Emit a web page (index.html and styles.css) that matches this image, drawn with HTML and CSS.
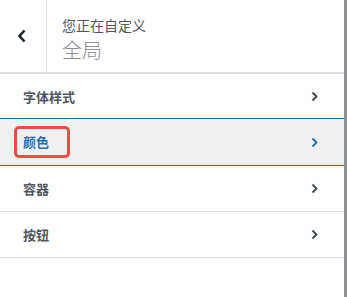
FILE: index.html
```html
<!DOCTYPE html>
<html lang="zh">
<head>
<meta charset="utf-8">
<link rel="stylesheet" href="styles.css">
</head>
<body>
<div class="panel">
  <div class="sidebar">
    <header class="head">
      <div class="back">
        <svg width="10" height="14" viewBox="0 0 10 14"><path d="M7.5 1.5 L2.5 7 L7.5 12.5" fill="none" stroke="#1d2327" stroke-width="2.6"/></svg>
      </div>
      <div class="title">
        <span class="sub">您正在自定义</span>
        <span class="main">全局</span>
      </div>
    </header>
    <ul class="list">
      <li class="item"><span class="label">字体样式</span><svg class="chev" width="7" height="11" viewBox="0 0 7 11"><path d="M1.5 1.5 L5.5 5.5 L1.5 9.5" fill="none" stroke="currentColor" stroke-width="1.8"/></svg></li>
      <li class="item active"><span class="label mark">颜色</span><svg class="chev" width="7" height="11" viewBox="0 0 7 11"><path d="M1.5 1.5 L5.5 5.5 L1.5 9.5" fill="none" stroke="currentColor" stroke-width="1.8"/></svg></li>
      <li class="item"><span class="label">容器</span><svg class="chev" width="7" height="11" viewBox="0 0 7 11"><path d="M1.5 1.5 L5.5 5.5 L1.5 9.5" fill="none" stroke="currentColor" stroke-width="1.8"/></svg></li>
      <li class="item"><span class="label">按钮</span><svg class="chev" width="7" height="11" viewBox="0 0 7 11"><path d="M1.5 1.5 L5.5 5.5 L1.5 9.5" fill="none" stroke="currentColor" stroke-width="1.8"/></svg></li>
    </ul>
  </div>
  <div class="scroll"></div>
</div>
</body>
</html>
```

FILE: styles.css
```css
html, body {
  margin: 0;
  padding: 0;
  background: #fff;
}
body {
  font-family: "Noto Sans CJK SC", "Noto Sans", sans-serif;
  color: #3c434a;
}
.panel {
  display: flex;
  height: 297px;
}
.sidebar {
  flex: 1;
  background: #fff;
}
.scroll {
  width: 3px;
  background: #8c8f94;
}
.head {
  display: flex;
  height: 72px;
  border-bottom: 2px solid #dcdcde;
}
.back {
  width: 47px;
  box-sizing: border-box;
  border-right: 1px solid #dcdcde;
  display: flex;
  align-items: center;
  justify-content: center;
  padding-right: 2px;
}
.title {
  display: flex;
  flex-direction: column;
  padding: 15px 0 0 15px;
}
.sub {
  font-size: 14px;
  line-height: 20px;
  color: #50575e;
}
.main {
  font-size: 20px;
  line-height: 26px;
  margin-top: 2px;
  font-weight: 300;
  color: #8c8f94;
}
.list {
  list-style: none;
  margin: 0;
  padding: 0;
}
.item {
  display: flex;
  align-items: center;
  justify-content: space-between;
  height: 45px;
  padding: 0 26px 0 23px;
  border-bottom: 1px solid #dcdcde;
  font-size: 13px;
  font-weight: 700;
  color: #50575e;
}
.item .chev {
  color: #3c434a;
}
.item.active {
  background: #f0f0f1;
  color: #2271b1;
  margin-top: -2px;
  height: 46px;
  border-top: 1px solid #2271b1;
  border-bottom-color: #2271b1;
}
.item.active .chev {
  color: #2271b1;
}
.label {
  line-height: 16px;
}
.mark {
  display: inline-block;
  border: 3px solid #f24b47;
  border-radius: 5px;
  padding: 5px 18px 5px 6px;
  margin-left: -9px;
}
```
